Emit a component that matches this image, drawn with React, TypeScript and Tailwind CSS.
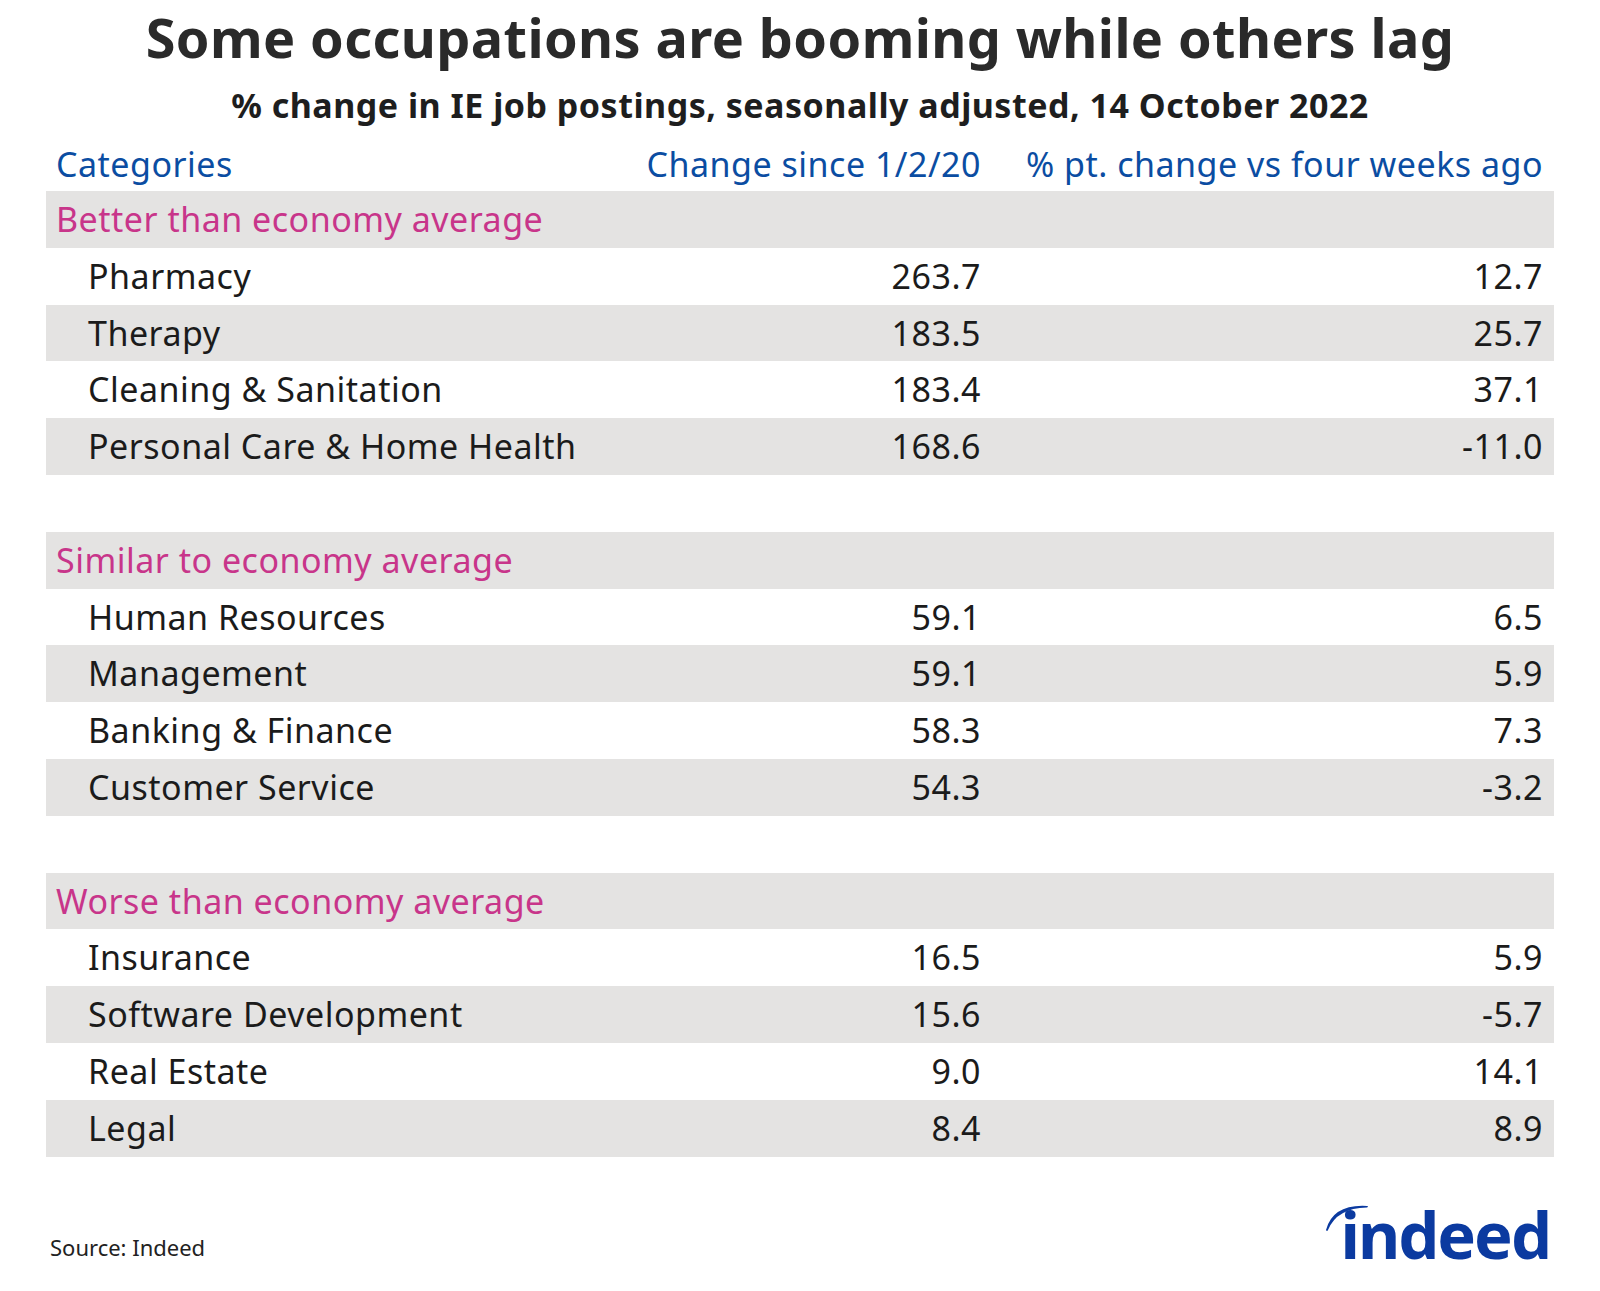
const SECTIONS = [
  {
    label: "Better than economy average",
    rows: [
      ["Pharmacy", "263.7", "12.7"],
      ["Therapy", "183.5", "25.7"],
      ["Cleaning & Sanitation", "183.4", "37.1"],
      ["Personal Care & Home Health", "168.6", "-11.0"],
    ],
  },
  {
    label: "Similar to economy average",
    rows: [
      ["Human Resources", "59.1", "6.5"],
      ["Management", "59.1", "5.9"],
      ["Banking & Finance", "58.3", "7.3"],
      ["Customer Service", "54.3", "-3.2"],
    ],
  },
  {
    label: "Worse than economy average",
    rows: [
      ["Insurance", "16.5", "5.9"],
      ["Software Development", "15.6", "-5.7"],
      ["Real Estate", "9.0", "14.1"],
      ["Legal", "8.4", "8.9"],
    ],
  },
];

const IndeedLogo = () => (
  <div className="relative mt-[42px] h-[70px]">
    <svg
      className="absolute left-[-16px] top-[3px]"
      width="46"
      height="30"
      viewBox="0 0 46 30">
      <path d="M1 28 Q8 2 42 4 Q44 4.5 42 5.5 Q12 6 3 28 Q2 30 1 28 Z" fill="#0b3aa0" />
    </svg>
    <span className="block text-[65px] font-bold leading-[70px] tracking-[-2px] text-[#0b3aa0]">
      indeed
    </span>
  </div>
);

const Row = ({
  cells,
  shaded,
}: {
  cells: string[];
  shaded: boolean;
}) => (
  <div
    className={`flex h-[56.8px] items-center text-[34px] leading-[56.8px] tracking-[0.5px] text-[#1b1b1b] ${
      shaded ? "bg-[#e4e3e2]" : "bg-white"
    }`}>
    <div className="flex-1 pl-[42px]">{cells[0]}</div>
    <div className="w-[400px] text-right">{cells[1]}</div>
    <div className="w-[573px] pr-[11px] text-right">{cells[2]}</div>
  </div>
);

export default function App() {
  let shadeIndex = 0;
  return (
    <div className="h-[1291px] w-[1600px] bg-white font-['Noto_Sans',sans-serif]">
      <div className="pt-[7px] text-center text-[54px] font-bold leading-[60px] tracking-[0.4px] text-[#2a2a2a]">
        Some occupations are booming while others lag
      </div>
      <div className="mt-[18px] text-center text-[34px] font-bold leading-[40px] tracking-[0.5px] text-[#1e1e1e]">
        % change in IE job postings, seasonally adjusted, 14 October 2022
      </div>

      <div className="mx-[46px] mt-[10px]">
        <div className="flex h-[56px] items-center pt-[2px] text-[34px] leading-[54px] tracking-[0.5px] text-[#0b4da2]">
          <div className="flex-1 pl-[10px]">Categories</div>
          <div className="w-[400px] text-right">Change since 1/2/20</div>
          <div className="w-[573px] pr-[11px] text-right">% pt. change vs four weeks ago</div>
        </div>

        {SECTIONS.map((section, i) => {
          shadeIndex = 0;
          return (
            <div key={section.label}>
              {i > 0 && <div className="h-[56.8px]" />}
              <div className="h-[56.8px] bg-[#e4e3e2] pl-[10px] text-[34px] leading-[56.8px] tracking-[0.5px] text-[#c8358a]">
                {section.label}
              </div>
              {section.rows.map((cells) => {
                shadeIndex += 1;
                return (
                  <Row key={cells[0]} cells={cells} shaded={shadeIndex % 2 === 0} />
                );
              })}
            </div>
          );
        })}
      </div>

      <div className="flex justify-between pl-[50px] pr-[50px]">
        <div className="mt-[78px] text-[22px] leading-[24px] text-[#222]">Source: Indeed</div>
        <IndeedLogo />
      </div>
    </div>
  );
}
